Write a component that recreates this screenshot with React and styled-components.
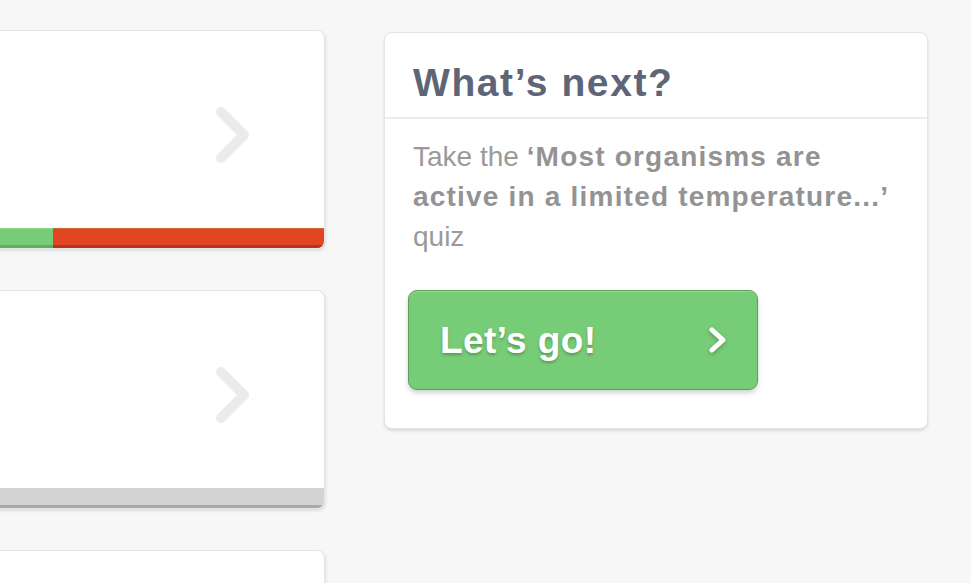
import styled, { createGlobalStyle } from "styled-components";

const GlobalStyle = createGlobalStyle`
    html, body {
        margin: 0;
        padding: 0;
        background: #f7f7f7;
        font-family: "Liberation Sans", Arial, sans-serif;
        overflow: hidden;
    }
`

function Chevron({ light }) {
    if (light) {
        return (
            <svg width="36" height="58" viewBox="0 0 36 58">
                <polyline points="6,6 29,29 6,52" fill="none" stroke="#ebebeb" strokeWidth="10" strokeLinecap="round" strokeLinejoin="round" />
            </svg>
        )
    }
    return (
        <svg width="22" height="28" viewBox="0 0 22 28" style={{ filter: "drop-shadow(0 2px 2px rgba(0,0,0,0.25))" }}>
            <polyline points="5,4 16,14 5,24" fill="none" stroke="#fff" strokeWidth="5" strokeLinecap="round" strokeLinejoin="round" />
        </svg>
    )
}

function LessonCard({ done, total }) {
    return (
        <Card>
            <CardBody>
                <Chevron light />
            </CardBody>
            <Progress $empty={!total}>
                {total ? (
                    <>
                        <Segment $tone="green" style={{ width: `${(done / total) * 100}%` }} />
                        <Segment $tone="red" style={{ flex: 1 }} />
                    </>
                ) : null}
            </Progress>
        </Card>
    )
}

export default function App() {
    return (
        <>
            <GlobalStyle />
            <Page>
                <Lessons>
                    <LessonCard done={32} total={100} />
                    <LessonCard />
                    <LessonCard />
                </Lessons>
                <NextCard>
                    <NextHeading>What’s next?</NextHeading>
                    <NextBody>
                        <p>
                            Take the <strong>‘Most organisms are active in a limited temperature...’</strong> quiz
                        </p>
                        <GoButton>
                            <span>Let’s go!</span>
                            <Chevron />
                        </GoButton>
                    </NextBody>
                </NextCard>
            </Page>
        </>
    )
}

const Page = styled.div`
    display: flex;
    align-items: flex-start;
    gap: 59px;
    padding-top: 30px;
    height: 583px;
    box-sizing: border-box;
    overflow: hidden;
`

const Lessons = styled.div`
    width: 400px;
    margin-left: -75px;
    display: flex;
    flex-direction: column;
    gap: 41px;
    flex-shrink: 0;
`

const Card = styled.div`
    background: #fff;
    border: 1px solid #e6e6e6;
    border-radius: 8px;
    box-shadow: 1px 2px 3px rgba(0, 0, 0, 0.1);
    overflow: hidden;
    display: flex;
    flex-direction: column;
    height: 219px;
    flex-shrink: 0;
    box-sizing: border-box;
`

const CardBody = styled.div`
    flex: 1;
    display: flex;
    align-items: center;
    justify-content: flex-end;
    padding: 10px 73px 0 0;
`

const Progress = styled.div`
    display: flex;
    height: 20px;
    background: #d3d3d3;
    border-bottom: 3px solid #a8a8a8;
    box-sizing: border-box;
    ${p => !p.$empty && "border-bottom: none;"}
`

const Segment = styled.div`
    height: 100%;
    box-sizing: border-box;
    background: ${p => (p.$tone === "green" ? "#77cc77" : "#e34422")};
    border-top: 1px solid ${p => (p.$tone === "green" ? "#8ad68a" : "#d0653c")};
    border-bottom: 3px solid ${p => (p.$tone === "green" ? "#62ad62" : "#b8351a")};
`

const NextCard = styled.div`
    width: 544px;
    margin-top: 2px;
    flex-shrink: 0;
    background: #fff;
    border: 1px solid #e4e4e4;
    border-radius: 8px;
    box-shadow: 0 2px 3px rgba(0, 0, 0, 0.12);
    box-sizing: border-box;
`

const NextHeading = styled.h2`
    margin: 0;
    padding: 30px 28px 14px;
    font-size: 39px;
    line-height: 40px;
    font-weight: 700;
    letter-spacing: 1.6px;
    color: #5d6577;
    border-bottom: 2px solid #ececec;
`

const NextBody = styled.div`
    padding: 18px 29px 38px 28px;
    p {
        margin: 0 0 33px;
        font-size: 28px;
        line-height: 40px;
        color: #9a9a9a;
    }
    strong {
        font-weight: 700;
        letter-spacing: 1.2px;
        color: #939393;
    }
`

const GoButton = styled.button`
    width: 350px;
    height: 100px;
    display: flex;
    align-items: center;
    justify-content: space-between;
    padding: 0 28px 0 31px;
    margin-left: -5px;
    background: #77cc77;
    border: 1.5px solid #5f9d5f;
    border-radius: 9px;
    box-shadow: 0 3px 5px rgba(0, 0, 0, 0.18), inset 0 1px 0 rgba(255, 255, 255, 0.25);
    font-family: "Liberation Sans", Arial, sans-serif;
    font-size: 37px;
    font-weight: 700;
    letter-spacing: 0.4px;
    color: #fff;
    text-shadow: 0 2px 3px rgba(0, 0, 0, 0.25);
    cursor: pointer;
    span {
        padding-top: 2px;
    }
`
